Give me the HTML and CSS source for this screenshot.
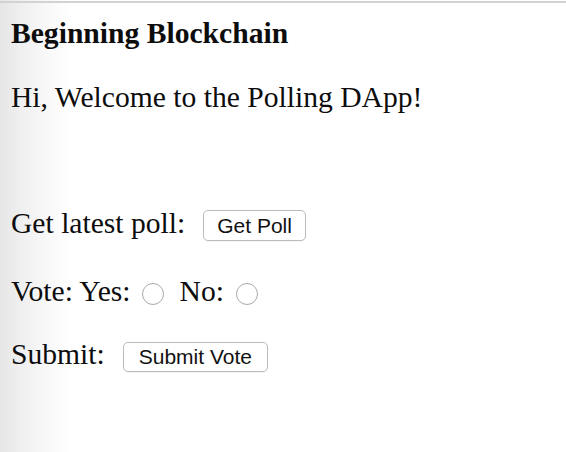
FILE: index.html
```html
<!DOCTYPE html>
<html>
<head>
<meta charset="utf-8">
<title>Polling DApp</title>
<link rel="stylesheet" href="styles.css">
</head>
<body>
<main class="page">
  <h3 class="title">Beginning Blockchain</h3>
  <p class="row intro">Hi, Welcome to the Polling DApp!</p>
  <p class="row get">Get latest poll: <button class="btn btn-get" type="button">Get Poll</button></p>
  <p class="row vote">Vote: Yes:<input class="radio radio-yes" type="radio" name="vote" value="yes"> No: <input class="radio" type="radio" name="vote" value="no"></p>
  <p class="row submit">Submit: <button class="btn btn-submit" type="button">Submit Vote</button></p>
</main>
</body>
</html>
```

FILE: styles.css
```css
html, body {
  margin: 0;
  padding: 0;
  height: 100%;
}

body {
  background: linear-gradient(to right, #e6e6e6 0px, #efefef 20px, #f6f6f6 40px, #fcfcfc 60px, #ffffff 75px);
  font-family: "Liberation Serif", "Times New Roman", serif;
  color: #0d0d0d;
}

.page {
  display: flex;
  flex-direction: column;
  align-items: flex-start;
  padding-left: 11px;
  border-top: 2px solid #d2d2d2;
  margin-top: 1px;
  box-sizing: border-box;
}

.title {
  margin: 13px 0 0;
  font-size: 29.6px;
  line-height: 34px;
  font-weight: bold;
}

.row {
  margin: 0;
  font-size: 29.6px;
  line-height: 34px;
  white-space: nowrap;
}

.intro { margin-top: 30px; }
.get { margin-top: 92px; }
.vote { margin-top: 33px; }
.submit { margin-top: 29px; }

.btn {
  font-family: "Liberation Sans", Arial, sans-serif;
  font-size: 21px;
  color: #111;
  background: #ffffff;
  border: 1px solid #bcbcbc;
  border-radius: 5px;
  height: 31px;
  margin: 0 0 0 10.6px;
  vertical-align: baseline;
  line-height: 1;
  box-shadow: 0 1px 0 rgba(0,0,0,0.04);
}

.btn-get { padding: 0 13px; }
.btn-submit { padding: 0 15px; height: 30px; }

.radio {
  appearance: none;
  -webkit-appearance: none;
  width: 22px;
  height: 22px;
  border: 1px solid #a9a9a9;
  border-radius: 50%;
  background: #ffffff;
  box-sizing: border-box;
  margin: 0 0 0 4.6px;
  vertical-align: 0;
  position: relative;
  top: 4px;
}

.radio-yes { margin-left: 11px; margin-right: 8.6px; }
```
